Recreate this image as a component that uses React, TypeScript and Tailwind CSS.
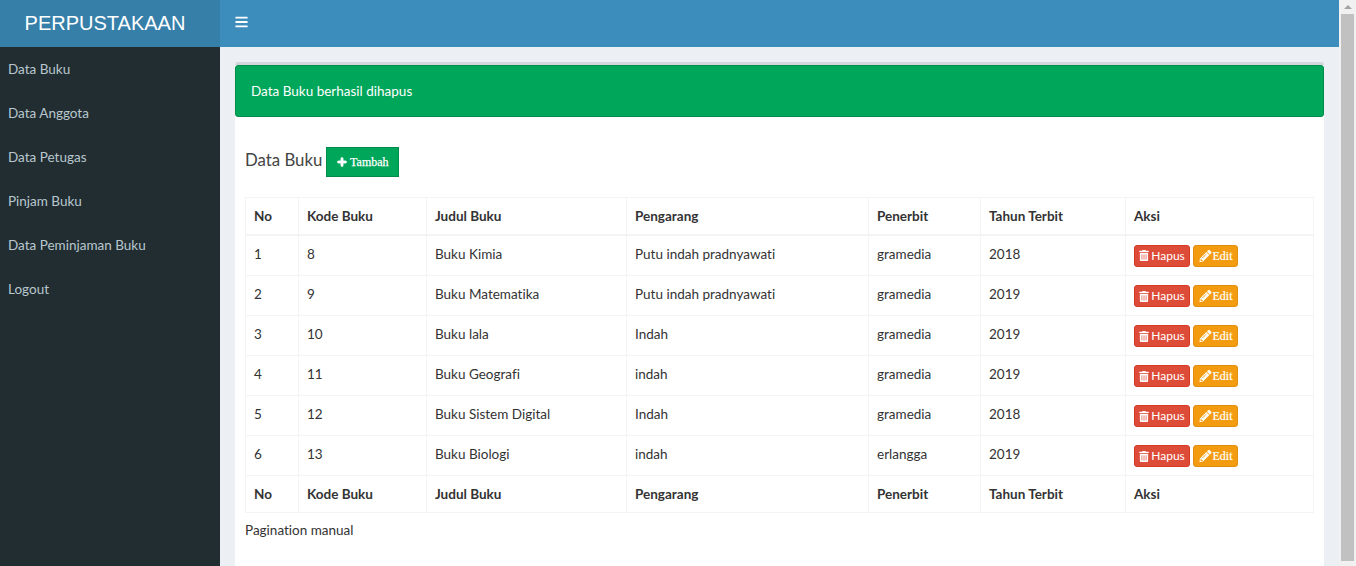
import React from 'react';
import { FaBars, FaPlus, FaTrashAlt, FaPencilAlt } from 'react-icons/fa';

const menu = ['Data Buku', 'Data Anggota', 'Data Petugas', 'Pinjam Buku', 'Data Peminjaman Buku', 'Logout'];
const columns = ['No', 'Kode Buku', 'Judul Buku', 'Pengarang', 'Penerbit', 'Tahun Terbit', 'Aksi'];
const books = [
  ['1', '8', 'Buku Kimia', 'Putu indah pradnyawati', 'gramedia', '2018'],
  ['2', '9', 'Buku Matematika', 'Putu indah pradnyawati', 'gramedia', '2019'],
  ['3', '10', 'Buku lala', 'Indah', 'gramedia', '2019'],
  ['4', '11', 'Buku Geografi', 'indah', 'gramedia', '2019'],
  ['5', '12', 'Buku Sistem Digital', 'Indah', 'gramedia', '2018'],
  ['6', '13', 'Buku Biologi', 'indah', 'erlangga', '2019'],
];

const Sidebar = () => (
  <aside className="w-[220px] shrink-0 flex flex-col bg-[#222d32]">
    <div className="h-[47px] shrink-0 bg-[#367fa9] flex items-center justify-center pr-[10px] pb-0.5 text-white text-[20px] font-['Liberation_Sans',sans-serif]">
      PERPUSTAKAAN
    </div>
    <nav className="flex flex-col">
      {menu.map((item) => (
        <a key={item} className="h-[44px] pl-2 flex items-center text-[#b8c7ce]">
          {item}
        </a>
      ))}
    </nav>
  </aside>
);

const HeaderRow = ({ thick }: { thick?: boolean }) => (
  <tr className={thick ? 'h-[37px]' : 'h-[37px]'}>
    {columns.map((col) => (
      <th key={col} className={`px-2 text-left font-bold text-[#333] border border-[#f4f4f4] ${thick ? 'border-b-2' : ''}`}>
        {col}
      </th>
    ))}
  </tr>
);

const Scrollbar = () => (
  <div className="w-[17px] shrink-0 bg-[#f1f1f1] flex flex-col items-center">
    <div className="h-[14px] flex items-center justify-center">
      <div className="w-0 h-0 border-x-[4px] border-x-transparent border-b-[4px] border-b-[#a3a3a3]" />
    </div>
    <div className="w-[13px] h-[547px] bg-[#c1c1c1]" />
  </div>
);

export default function App() {
  return (
    <div className="h-[566px] w-[1356px] flex overflow-hidden font-['Lato',sans-serif] text-[13.5px] leading-5 [font-variant-ligatures:none] text-[#333]">
      <Sidebar />
      <div className="flex-1 flex flex-col bg-[#ecf0f5] min-w-0">
        <header className="h-[47px] shrink-0 bg-[#3c8dbc] flex items-center pl-[15px] pb-[3px] text-white">
          <FaBars className="w-[13px] h-[14px]" />
        </header>
        <main className="flex-1 px-[15px] pt-[15px]">
          <div className="bg-white border-t-[3px] border-[#d2d6de] rounded-[3px] h-[600px]">
            <div className="h-[52px] flex items-center pl-[15px] bg-[#00a65a] border border-[#008d4c] rounded-[3px] text-white">
              Data Buku berhasil dihapus
            </div>
            <div className="px-2.5 pt-[30px]">
              <div className="flex items-center gap-1 text-[#444]">
                <span className="text-[16.8px] mb-[5px]">Data Buku</span>
                <button className="w-[73px] h-[30px] flex items-center justify-center gap-[3px] bg-[#00a65a] border border-[#008d4c] text-white text-xs font-['Liberation_Serif',serif] [-webkit-text-stroke:0.25px_white]">
                  <FaPlus className="w-[10px] h-[10px] stroke-white stroke-[50]" />
                  Tambah
                </button>
              </div>
              <table className="w-[1068px] mt-5 table-fixed border-collapse">
                <colgroup>
                  <col className="w-[53px]" />
                  <col className="w-[128px]" />
                  <col className="w-[200px]" />
                  <col className="w-[242px]" />
                  <col className="w-[112px]" />
                  <col className="w-[145px]" />
                  <col className="w-[188px]" />
                </colgroup>
                <thead>
                  <HeaderRow thick />
                </thead>
                <tbody>
                  {books.map((row, r) => (
                    <tr key={row[0]} className={r === 0 ? 'h-[41px]' : 'h-[40px]'}>
                      {row.map((cell, i) => (
                        <td key={i} className="px-2 pt-2 align-top border border-[#f4f4f4]">
                          {cell}
                        </td>
                      ))}
                      <td className="px-2 pt-[9px] align-top border border-[#f4f4f4]">
                        <div className="flex gap-[3px] text-xs text-white">
                          <button className="w-[56px] h-[22px] flex items-center justify-center gap-0.5 bg-[#dd4b39] border border-[#d73925] rounded-[3px]">
                            <FaTrashAlt className="w-[10px] h-[11px]" />
                            Hapus
                          </button>
                          <button className="w-[45px] h-[22px] flex items-center justify-center gap-px bg-[#f39c12] border border-[#e08e0b] rounded-[3px] font-['Liberation_Serif',serif] [-webkit-text-stroke:0.2px_white]">
                            <FaPencilAlt className="w-[13px] h-[12px]" />
                            Edit
                          </button>
                        </div>
                      </td>
                    </tr>
                  ))}
                </tbody>
                <tfoot>
                  <HeaderRow />
                </tfoot>
              </table>
              <p className="mt-[7px]">Pagination manual</p>
            </div>
          </div>
        </main>
      </div>
      <Scrollbar />
    </div>
  );
}
